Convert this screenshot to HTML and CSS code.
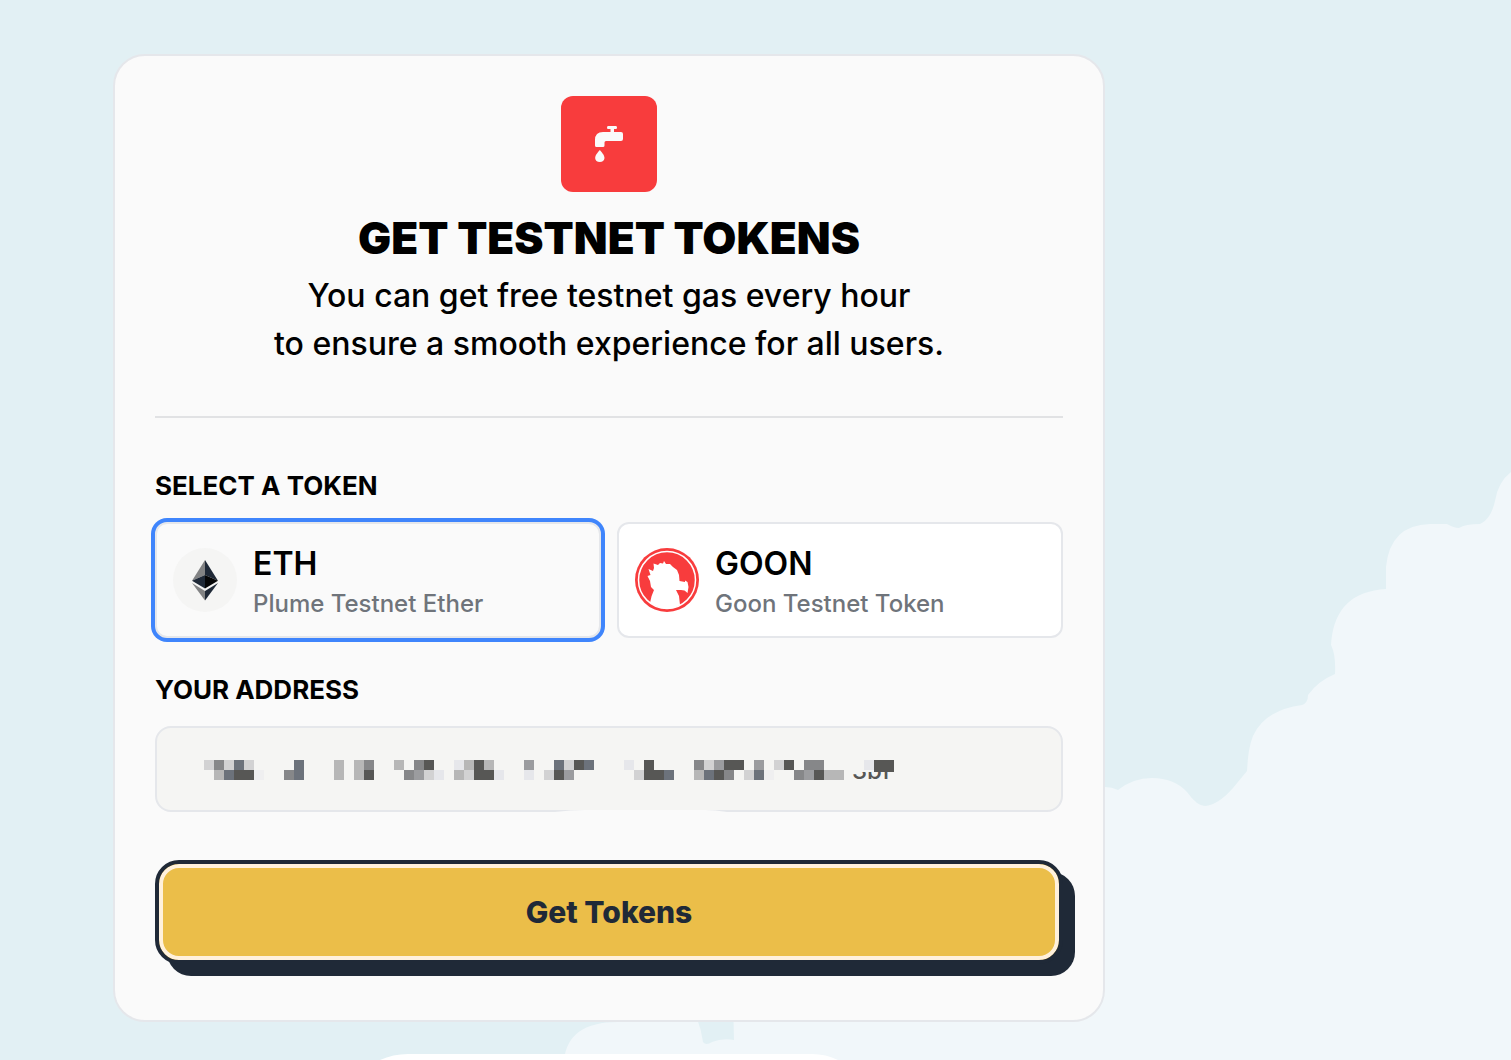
FILE: index.html
```html
<!DOCTYPE html>
<html lang="en">
<head>
    <meta charset="UTF-8">
    <meta name="viewport" content="width=device-width, initial-scale=1">
    <title>Get testnet tokens</title>
    <link rel="stylesheet" href="styles.css">
</head>
<body>
<svg class="sky" viewBox="0 0 1511 1060" preserveAspectRatio="xMaxYMax slice" aria-hidden="true">
    <path class="cloud" d="M1080 787 H1105 Q1112 787 1118 790 Q1133 778 1152 778 Q1174 778 1187 792 Q1197 806 1205 806 Q1218 805 1233 788 L1247 771 Q1248 748 1253 736 Q1265 710 1302 705 Q1308 703 1308 695 Q1318 681 1335 674 Q1336 655 1331 645 Q1334 592 1386 589 V567 Q1390 525 1430 524 H1447 Q1454 528 1459 528 Q1465 524 1480 524 Q1491 519 1495 501 Q1498 482 1511 472 V1060 H564 Q568 1022 618 1022 V1000 H686 Q700 1018 703 1042 Q706 1046 712 1042 Q722 1038 734 1040 L733 1000 H1080 Z" />
    <path class="panel-edge" d="M380 1060 Q393 1054 408 1054 H812 Q826 1054 838 1060 Z" />
</svg>
<main class="page">
    <form class="card">
        <header class="intro">
            <svg class="faucet" viewBox="-34 -30 96 96" aria-hidden="true">
                <path d="M13 0 h8 q1 0 1 1.500 q0 1.500 -1 1.500 h-2 v3 h7 q2 0 2 2 v5 q0 2 -2 2 H11 q-1.500 0 -1.500 1.500 v3 q0 1.500 -1.500 1.500 H1.500 q-1.500 0 -1.500 -1.500 V14 q0 -8 8 -8 h7.500 V3 H13 q-1 0 -1 -1.500 q0 -1.500 1 -1.500 Z" />
                <path d="M4.800 24 Q9.500 29 9.500 32 Q9 36 4.800 36 Q0.500 36 0.100 32 Q0.100 29 4.800 24 Z" />
            </svg>
            <h1>GET TESTNET TOKENS</h1>
            <p>You can get free testnet gas every hour<br>to ensure a smooth experience for all users.</p>
        </header>

        <fieldset class="tokens">
            <legend class="field-label">SELECT A TOKEN</legend>
            <div class="token-list">
                <label class="token">
                    <input type="radio" name="token" value="eth" checked>
                    <svg class="token-icon" viewBox="0 0 64 64" aria-hidden="true">
                        <circle cx="32" cy="32" r="32" fill="#f5f5f4" />
                        <path d="M32 12 L19 32.700 L32 27 Z" fill="#828384" />
                        <path d="M32 12 L45 32.700 L32 27 Z" fill="#1f2937" />
                        <path d="M19 32.700 L32 27 V40.500 Z" fill="#1f2937" />
                        <path d="M45 32.700 L32 27 V40.500 Z" fill="#050607" />
                        <path d="M19 35 L32 43 V52.500 Z" fill="#828384" />
                        <path d="M45 35 L32 43 V52.500 Z" fill="#1f2937" />
                    </svg>
                    <span class="token-text">
                        <span class="token-name">ETH</span>
                        <span class="token-note">Plume Testnet Ether</span>
                    </span>
                </label>
                <label class="token">
                    <input type="radio" name="token" value="goon">
                    <svg class="token-icon" viewBox="0 0 64 64" aria-hidden="true">
                        <circle cx="32" cy="32" r="32" fill="#f83c3d" />
                        <circle cx="32" cy="32" r="28.500" fill="none" stroke="#fff" stroke-width="1.500" />
                        <path fill="#fff" d="M15 55 Q16 48 19 42 L16 39 L15 33 L12.500 28 L15.500 27 L13.500 21 L18 23 L19 20 L18.500 15.500 L23 17 L25 15 L28 15.500 L29 13 L31 16 L35 16 L38 19 L42 22 L44 27 L44.500 33 L50 34 L50 32.500 L52.500 34 L53.500 39 L52.500 45 L49.500 42.500 L46 42 L41 42 L44 48 L45 57 Q32 65 15 55 Z" />
                    </svg>
                    <span class="token-text">
                        <span class="token-name">GOON</span>
                        <span class="token-note">Goon Testnet Token</span>
                    </span>
                </label>
            </div>
        </fieldset>

        <label class="field-label" for="address">YOUR ADDRESS</label>
        <div class="address">
            <input id="address" type="text" readonly>
            <!-- masked address, one path per shade on a 10px grid -->
            <svg class="mask" width="908" height="86" aria-hidden="true">
                <clipPath id="tail"><rect x="690" y="46" width="60" height="12" /></clipPath>
                <text x="697" y="53" clip-path="url(#tail)">3bf</text>
                <g transform="translate(49 34) scale(10)" shape-rendering="crispEdges">
                    <path fill="#e6e7eb" d="M25 0h1v1h-1z M23 1h1v1h-1z M29 1h1v1h-1z M32 1h1v1h-1z M42 0h1v1h-1z M66 0h1v1h-1z" />
                    <path fill="#efeff0" d="M5 1h1v1h-1z M56 1h1v1h-1z" />
                    <path fill="#d2d2d3" d="M0 0h1v1h-1z M2 0h1v1h-1z M4 0h1v1h-1z M22 1h1v1h-1z M26 1h1v1h-1z M34 1h1v1h-1z M36 0h1v1h-1z M43 1h1v1h-1z M50 0h1v1h-1z M54 1h1v1h-1z M57 0h1v1h-1z" />
                    <path fill="#b7b7b7" d="M1 1h1v1h-1z M13 0h1v2h-1z M15 0h1v2h-1z M19 0h1v1h-1z M25 1h1v1h-1z M26 0h1v1h-1z M28 0h1v1h-1z M49 1h1v1h-1z M62 1h2v1h-2z" />
                    <path fill="#9b9c9f" d="M21 1h1v1h-1z M32 0h1v1h-1z M36 1h1v1h-1z M51 0h1v1h-1z M55 0h1v1h-1z M60 1h1v1h-1z" />
                    <path fill="#868789" d="M1 0h1v1h-1z M8 1h1v1h-1z M16 0h1v1h-1z M20 1h1v1h-1z M21 0h1v1h-1z M49 0h1v1h-1z M52 1h1v1h-1z M59 1h1v1h-1z M60 0h2v1h-2z" />
                    <path fill="#6c727b" d="M2 1h1v1h-1z M3 0h1v1h-1z M9 0h1v2h-1z M35 0h1v1h-1z M38 0h1v1h-1z M46 1h1v1h-1z M50 1h1v1h-1z M55 1h1v1h-1z" />
                    <path fill="#575755" d="M3 1h2v1h-2z M16 1h1v1h-1z M22 0h1v1h-1z M27 0h1v2h-1z M28 1h1v1h-1z M35 1h1v1h-1z M37 0h1v1h-1z M44 0h1v2h-1z M45 1h1v1h-1z M51 1h1v1h-1z M52 0h2v1h-2z M58 0h1v1h-1z M61 1h1v1h-1z M67 0h2v1.200h-2z" />
                </g>
                <path fill="#fafafa" d="M400 86 Q416 84 430 84 H550 Q560 84 572 86 Z" />
            </svg>
        </div>

        <button class="submit" type="button">Get Tokens</button>
    </form>
</main>
</body>
</html>
```
FILE: styles.css
```css
* {
    box-sizing: border-box;
}

body {
    margin: 0;
    min-height: 100vh;
    background: #e2f0f4;
    color: #000;
    font-family: Inter, "Liberation Sans", sans-serif;
}

.sky {
    position: fixed;
    inset: 0;
    z-index: -1;
    width: 100%;
    height: 100%;
}

.cloud {
    fill: #f1f7fa;
}

.panel-edge {
    fill: #fff;
}

.page {
    padding: 54px 24px 38px 113px;
}

.card {
    max-width: 992px;
    padding: 40px;
    border: 2px solid #e5e7eb;
    border-radius: 32px;
    background: #fafafa;
}

.intro {
    margin-bottom: 48px;
    padding-bottom: 48px;
    border-bottom: 2px solid #e1e2e4;
    text-align: center;
}

.faucet {
    display: block;
    width: 96px;
    height: 96px;
    margin: 0 auto 22px;
    border-radius: 12px;
    background: #f83c3d;
    fill: #fafafa;
}

h1 {
    margin: 0 0 10px;
    font-size: 44px;
    line-height: 48px;
    font-weight: 900;
}

.intro p {
    margin: 0;
    font-size: 32px;
    line-height: 48px;
    font-weight: 500;
}

.tokens {
    margin: 0 0 32px;
    padding: 0;
    border: 0;
}

.field-label {
    display: block;
    margin-bottom: 16px;
    padding: 0;
    font-size: 26px;
    line-height: 40px;
    font-weight: 700;
}

.token-list {
    display: grid;
    grid-template-columns: 1fr 1fr;
    gap: 16px;
}

.token {
    display: flex;
    align-items: center;
    gap: 16px;
    padding: 16px;
    border: 2px solid #e5e7eb;
    border-radius: 12px;
    background: #fff;
    cursor: pointer;
}

.token:has(input:checked) {
    background: #fafafa;
    box-shadow: 0 0 0 4px #3f85fc;
}

.token input {
    position: absolute;
    opacity: 0;
}

.token-icon {
    flex: none;
    width: 64px;
    height: 64px;
}

.token-text {
    display: flex;
    flex-direction: column;
}

.token-name {
    font-size: 32px;
    line-height: 48px;
    font-weight: 600;
}

.token-note {
    color: #6f747b;
    font-size: 24px;
    line-height: 32px;
    font-weight: 500;
}

.address {
    position: relative;
    overflow: hidden;
    margin-bottom: 48px;
}

.address input {
    display: block;
    width: 100%;
    height: 86px;
    padding: 0 48px;
    border: 2px solid #e5e7eb;
    border-radius: 16px;
    background: #f5f5f3;
    font: inherit;
    font-size: 24px;
}

/* lies over the input */
.mask {
    position: absolute;
    top: 0;
    left: 0;
    pointer-events: none;
}

.mask text {
    fill: #575755;
    font-size: 24px;
    font-weight: 500;
}

.submit {
    display: block;
    width: 100%;
    height: 104px;
    margin-bottom: 16px;
    border: 4px solid #1f2937;
    border-radius: 24px;
    background: #ebbe49;
    box-shadow: inset 0 0 0 4px #fff1dc, 12px 12px 0 #1f2937;
    color: #1f2937;
    font: inherit;
    font-size: 30px;
    font-weight: 800;
    cursor: pointer;
}
```
